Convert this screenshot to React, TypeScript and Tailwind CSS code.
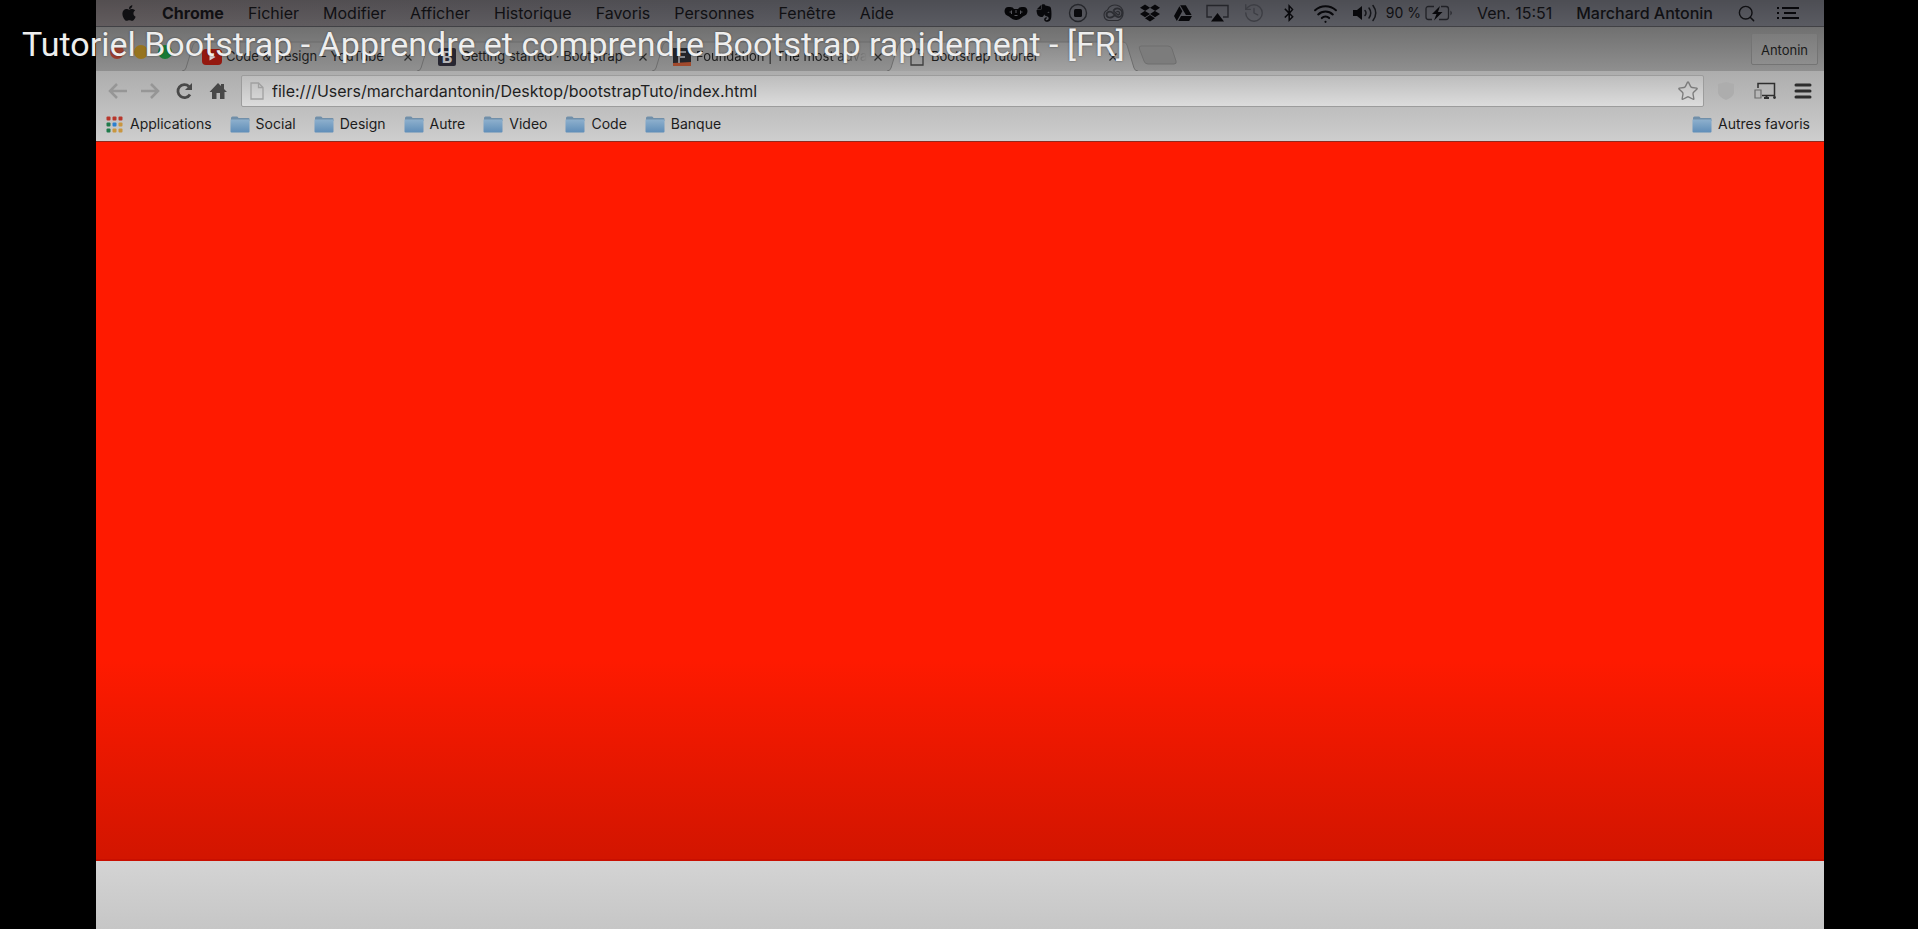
import { History, Search, Star, Wifi } from "lucide-react"
import { FaApple, FaBluetoothB, FaDropbox, FaEvernote, FaGoogleDrive } from "react-icons/fa"

const menus = ["Fichier", "Modifier", "Afficher", "Historique", "Favoris", "Personnes", "Fenêtre", "Aide"]
const bookmarks = ["Social", "Design", "Autre", "Video", "Code", "Banque"]

const FolderIcon = () => (
  <svg viewBox="0 0 20 17" className="h-[17px] w-5 shrink-0" aria-hidden="true">
    <defs>
      <linearGradient id="folder" x1="0" y1="0" x2="0" y2="1">
        <stop offset="0" stopColor="#8eb0cd" />
        <stop offset="1" stopColor="#5f8db8" />
      </linearGradient>
    </defs>
    <path d="M1 4V2Q1 .5 2.500 .5H7Q8 .5 8.500 2H18.500Q19.500 2 19.500 3V5H1Z" fill="#718fa9" />
    <path d="M.5 3.500H19.500V15.500Q19.500 16.500 18.500 16.500H1.500Q.5 16.500 .5 15.500Z" fill="url(#folder)" />
  </svg>
)

const PageIcon = ({ className }: { className: string }) => (
  <svg viewBox="0 0 14 18" className={className} fill="none" stroke="currentColor" strokeWidth="1.300" aria-hidden="true">
    <path d="M1 1H8.500L13 5.500V17H1Z" />
    <path d="M8.500 1V5.500H13" />
  </svg>
)

const MaskIcon = () => (
  <svg viewBox="0 0 24 16" className="h-4 w-6" aria-hidden="true">
    <path d="M.5 6Q1 1.500 5 2Q9 1.500 10 4H14Q15 1.500 19 2Q23 1.500 23.500 6Q23.500 10 19 11.500Q15 15 12 15T5 11.500Q.5 10 .5 6Z" fill="#060608" />
    <path d="M7.500 5.500V9M5.500 7H8M16.500 5.500V9M16 7H18.500M12 5V8M10.500 10.500H13.500" stroke="#56575d" strokeWidth="1" fill="none" />
  </svg>
)

const StopIcon = () => (
  <svg viewBox="0 0 20 20" className="size-5" aria-hidden="true">
    <circle cx="10" cy="10" r="8.500" fill="none" stroke="#25262b" strokeWidth="1.400" />
    <rect x="6" y="6" width="8" height="8" rx="1.500" fill="#0b0b0e" />
  </svg>
)

const CloudIcon = () => (
  <svg viewBox="0 0 24 18" className="h-[18px] w-6" fill="none" stroke="#2c2d32" aria-hidden="true">
    <path d="M6.500 16.500A5.500 5.500 0 0 1 5.500 6A8 8 0 0 1 15 1.300A8 8 0 0 1 16 16.500Z" strokeWidth="1.100" />
    <path d="M12.500 11.500L10 13.200Q6.500 14.500 4.800 12Q3.800 9 6.500 7.800Q9 7 11 9L14 12Q17 14.500 19.500 11.500Q21.500 7.500 18 5.200Q14 3.200 11.500 6.500" strokeWidth="1.800" />
    <path d="M11 6.500L16 11Q18 10.500 17.500 8.500Q16 6.500 14.500 8" strokeWidth="1.400" />
  </svg>
)

const AirplayIcon = () => (
  <svg viewBox="0 0 23 18" className="h-[18px] w-[23px]" aria-hidden="true">
    <path d="M6 13H1V1.500H22V13H17" fill="none" stroke="#25262b" strokeWidth="1.400" />
    <path d="M11.500 9L18 17.500H5Z" fill="#08080b" />
  </svg>
)

const VolumeIcon = () => (
  <svg viewBox="0 0 26 20" className="h-5 w-[26px]" fill="none" stroke="#15161a" strokeWidth="1.500" strokeLinecap="round" aria-hidden="true">
    <path d="M1 7H5L10 3V17L5 13H1Z" fill="#08080b" stroke="none" />
    <path d="M13 7.500Q15 10 13 12.500M17 5Q20.500 10 17 15M21 2.500Q26.500 10 21 17.500" />
  </svg>
)

const BatteryIcon = () => (
  <svg viewBox="0 0 28 16" className="h-4 w-7" fill="none" stroke="#202126" strokeWidth="1.300" aria-hidden="true">
    <path d="M9 1.500H3.500Q1 1.500 1 4V12Q1 14.500 3.500 14.500H7M16 1.500H21Q23.500 1.500 23.500 4V12Q23.500 14.500 21 14.500H14" />
    <path d="M25.500 5.500Q28 8 25.500 10.500Z" fill="#202126" stroke="none" />
    <path d="M15 1L7 9H11.500L9 15.500L17.500 7H13Z" fill="#08080b" stroke="none" />
  </svg>
)

const ListIcon = () => (
  <svg viewBox="0 0 24 16" className="h-4 w-6" stroke="#08080b" strokeWidth="2" aria-hidden="true">
    <path d="M1 3H3M1 8H3M1 13H3M6 3H23M8 8H20M6 13H23" />
  </svg>
)

const AppsIcon = () => {
  const dots = ["#b8362b", "#b8362b", "#b8362b", "#1f7a4a", "#2b7fd0", "#c9963f", "#1f7a4a", "#c9963f", "#c9963f"]
  return (
    <svg viewBox="0 0 17 17" className="size-[17px]" aria-hidden="true">
      {dots.map((color, i) => (
        <rect key={i} x={(i % 3) * 6 + 0.5} y={Math.floor(i / 3) * 6 + 0.5} width="4" height="4" rx="1" fill={color} />
      ))}
    </svg>
  )
}

const YoutubeIcon = () => (
  <svg viewBox="0 0 20 18" className="h-[18px] w-5" aria-hidden="true">
    <rect x="0" y="1" width="20" height="16" rx="4" fill="#94180f" />
    <path d="M7.500 5.500V12.500L13.500 9Z" fill="#d8d0d0" />
  </svg>
)

const BootstrapIcon = () => (
  <span className="flex size-[18px] items-center justify-center rounded-xs bg-[#272631] text-base leading-4 font-bold text-[#b5b5b8]">B</span>
)

const FoundationIcon = () => (
  <svg viewBox="0 0 18 18" className="size-[18px]" aria-hidden="true">
    <rect width="18" height="18" fill="#24252a" />
    <path d="M0 15L18 14V18H0Z" fill="#a1492c" />
    <path d="M6 15V4H13M6 9H12" stroke="#85868b" strokeWidth="2" fill="none" />
  </svg>
)

const TabShape = ({ active }: { active?: boolean }) => (
  <svg viewBox="0 0 251 30" preserveAspectRatio="none" className="absolute inset-y-0 -left-2 h-full w-[251px]" aria-hidden="true">
    <defs>
      <linearGradient id="tab" x1="0" y1="0" x2="0" y2="1">
        <stop offset="0" stopColor="#7e7e7e" />
        <stop offset="1" stopColor="#909090" />
      </linearGradient>
      <linearGradient id="tab-active" x1="0" y1="0" x2="0" y2="1">
        <stop offset="0" stopColor="#888888" />
        <stop offset="1" stopColor="#a3a3a3" />
      </linearGradient>
    </defs>
    <path
      d="M0 30Q3 30 4 27L11 4Q12 1 15 1H236Q239 1 240 4L247 27Q248 30 251 30"
      fill={active ? "url(#tab-active)" : "url(#tab)"}
      stroke="#6d6d6d"
      strokeWidth="1"
    />
  </svg>
)

const tabs = [
  { title: "Code & Design - YouTube", icon: <YoutubeIcon /> },
  { title: "Getting started · Bootstrap", icon: <BootstrapIcon /> },
  { title: "Foundation | The most adva", icon: <FoundationIcon />, fade: true },
  { title: "Bootstrap tutoriel", icon: <PageIcon className="h-[18px] w-3.5 text-[#3d3d3d]" />, active: true },
]

const MenuBar = () => (
  <header className="flex h-[27px] items-center justify-between border-b border-[#414145] bg-[linear-gradient(to_bottom,rgb(0_0_0/0.15),transparent),linear-gradient(to_right,#625c5e,#5a5b62_45%)] px-6 text-base text-[#101013]">
    <nav className="flex items-center gap-6">
      <button type="button" aria-label="Apple">
        <FaApple className="size-[18px]" />
      </button>
      <button type="button" className="font-bold">Chrome</button>
      {menus.map((menu) => (
        <button key={menu} type="button">{menu}</button>
      ))}
    </nav>
    <div className="flex items-center">
      <div className="flex items-center gap-3.5 text-[#08080b]">
        <MaskIcon />
        <FaEvernote className="-ml-2 size-5" />
        <StopIcon />
        <CloudIcon />
        <FaDropbox className="size-5" />
        <FaGoogleDrive className="size-[18px]" />
        <AirplayIcon />
        <History className="size-[22px] text-[#3d3e44]" strokeWidth={1.5} />
        <FaBluetoothB className="mx-1 h-[18px] w-3" />
        <Wifi className="size-[25px]" strokeWidth={2} />
        <VolumeIcon />
      </div>
      <span className="ml-2 text-sm">90 %</span>
      <span className="ml-1"><BatteryIcon /></span>
      <span className="ml-6">Ven. 15:51</span>
      <span className="ml-6 font-medium">Marchard Antonin</span>
      <button type="button" aria-label="Rechercher" className="ml-6">
        <Search className="size-[19px]" strokeWidth={1.8} />
      </button>
      <button type="button" aria-label="Notifications" className="ml-5">
        <ListIcon />
      </button>
    </div>
  </header>
)

const TabStrip = () => (
  <div className="flex h-11 items-end bg-linear-to-b from-[#707070] to-[#8f8f8f] pl-3.5">
    <div className="mb-3 flex w-20 gap-2.5 self-end">
      <span className="size-[14px] rounded-full bg-[#9c3e2f]" />
      <span className="size-[14px] rounded-full bg-[#96741f]" />
      <span className="size-[14px] rounded-full bg-[#197a37]" />
    </div>
    <div className="flex" role="tablist">
      {tabs.map((tab) => (
        <div key={tab.title} className="relative flex h-[30px] w-[235px] items-center pt-0.5 pr-3 pl-3">
          <TabShape active={tab.active} />
          <button type="button" role="tab" aria-selected={!!tab.active} className="relative flex flex-1 items-center gap-1">
            <span className="flex w-5 shrink-0 justify-center">{tab.icon}</span>
            <span className={`text-[13px] whitespace-nowrap text-[#1c1c1c] ${tab.fade ? "mask-r-from-80%" : ""}`}>
              {tab.title}
            </span>
          </button>
          <button type="button" aria-label="Fermer" className="relative">
            <svg viewBox="0 0 10 10" className="size-2.5" stroke="#2c2c2c" strokeWidth="1.300">
              <path d="M1.500 1.500L8.500 8.500M8.500 1.500L1.500 8.500" />
            </svg>
          </button>
        </div>
      ))}
    </div>
    <button type="button" aria-label="Nouvel onglet" className="mb-1.5 ml-2">
      <svg viewBox="0 0 40 20" className="h-5 w-10">
        <path d="M3 1H30Q33 1 34 4L38 16Q39 19 36 19H10Q7 19 6 16L1.500 4Q.5 1 3 1Z" fill="#7c7c7c" stroke="#6e6e6e" />
      </svg>
    </button>
    <button type="button" className="mr-1.5 mb-1.5 ml-auto h-8 rounded-xs border border-[#747474] bg-linear-to-b from-[#7c7c7c] to-[#8e8e8e] px-[9px] pt-1 text-[13px] text-[#1a1a1a]">
      Antonin
    </button>
  </div>
)

const Toolbar = () => (
  <div className="flex h-10 items-center px-3">
    <button type="button" aria-label="Précédent" className="text-[#969696]">
      <svg viewBox="0 0 20 16" className="h-4 w-5" fill="none" stroke="currentColor" strokeWidth="2.500">
        <path d="M19 8H2M9 1L2 8L9 15" />
      </svg>
    </button>
    <button type="button" aria-label="Suivant" className="ml-3 text-[#969696]">
      <svg viewBox="0 0 20 16" className="h-4 w-5" fill="none" stroke="currentColor" strokeWidth="2.500">
        <path d="M1 8H18M11 1L18 8L11 15" />
      </svg>
    </button>
    <button type="button" aria-label="Actualiser" className="ml-[15px]">
      <svg viewBox="0 0 18 18" className="size-[18px]" fill="none" stroke="#484848" strokeWidth="2.800">
        <path d="M15 12.500A6.500 6.500 0 1 1 14 4.500" />
        <path d="M17 1V8H10Z" fill="#484848" stroke="none" />
      </svg>
    </button>
    <button type="button" aria-label="Accueil" className="ml-4">
      <svg viewBox="0 0 18 18" className="size-[18px]" fill="#484848">
        <path d="M9 1L12 4V2H15V7L18 10H15.500V17H11V11H7.500V17H3V10H.5Z" />
      </svg>
    </button>
    <div className="ml-3.5 flex h-8 flex-1 items-center rounded-xs border border-[#9c9c9c] bg-linear-to-b from-[#bdbdbd] to-[#dcdcdc] pr-1 pl-2">
      <PageIcon className="h-[18px] w-3.5 text-[#a0a0a0]" />
      <input
        type="text"
        aria-label="Adresse"
        defaultValue="file:///Users/marchardantonin/Desktop/bootstrapTuto/index.html"
        className="ml-2 min-w-0 flex-1 bg-transparent text-base text-[#1f1f1f] outline-none"
      />
      <button type="button" aria-label="Ajouter aux favoris">
        <Star className="size-[22px] text-[#7c7c7c]" strokeWidth={1.5} />
      </button>
    </div>
    <svg viewBox="0 0 16 18" className="ml-3.5 h-[18px] w-4" aria-hidden="true">
      <path d="M0 2L8 0L16 2V11Q15 15 8 18Q1 15 0 11Z" fill="#adadad" />
    </svg>
    <button type="button" aria-label="Appareils" className="ml-5">
      <svg viewBox="0 0 22 18" className="h-[18px] w-[22px]" fill="none" stroke="#2e2e2e" strokeWidth="1.500">
        <path d="M4 6V1.500H20.500V13.500H8" />
        <path d="M1 8H7V16H1Z" stroke="#6b6b6b" strokeWidth="1.200" />
        <path d="M10 16H15M12.500 13V16" strokeWidth="2" />
        <circle cx="20.500" cy="15.500" r=".7" />
      </svg>
    </button>
    <button type="button" aria-label="Menu" className="ml-[18px]">
      <svg viewBox="0 0 18 16" className="h-4 w-[18px]" stroke="#2d2d2d" strokeWidth="3" strokeLinecap="round">
        <path d="M2 2H16M2 8H16M2 14H16" />
      </svg>
    </button>
  </div>
)

const BookmarksBar = () => (
  <nav className="flex h-[31px] items-center border-b border-[#8f2a1e] pr-3.5 pb-1 pl-2.5 text-sm text-[#1c1c1c]">
    <a href="#applications" className="mr-[18px] flex items-center gap-[7px]">
      <AppsIcon />
      Applications
    </a>
    {bookmarks.map((name) => (
      <a key={name} href={`#${name}`} className="mr-[18px] flex items-center gap-1.5">
        <FolderIcon />
        {name}
      </a>
    ))}
    <a href="#autres" className="ml-auto flex items-center gap-1.5">
      <FolderIcon />
      Autres favoris
    </a>
  </nav>
)

export default function App() {
  return (
    <div className="relative flex min-h-screen flex-col overflow-hidden bg-black pr-[94px] pl-24 font-['Inter','Liberation_Sans',sans-serif]">
      <MenuBar />
      <TabStrip />
      <div className="bg-linear-to-b from-[#adadad] to-[#cecece]">
        <Toolbar />
        <BookmarksBar />
      </div>
      <main className="flex-1 border-b-2 border-[#c90f00] bg-linear-to-b from-[#ff1a00] from-72% to-[#d21500]" />
      <footer className="h-[68px] bg-linear-to-b from-[#d4d4d4] to-[#c6c6c6]" />

      {/* video title laid over the player */}
      <h1 className="absolute top-6 left-[22px] font-['Roboto',sans-serif] text-[34px] leading-10 whitespace-nowrap text-[#eeeeee] text-shadow-[0_0_2px_rgb(0_0_0/0.5)]">
        Tutoriel Bootstrap - Apprendre et comprendre Bootstrap rapidement - [FR]
      </h1>
    </div>
  )
}
